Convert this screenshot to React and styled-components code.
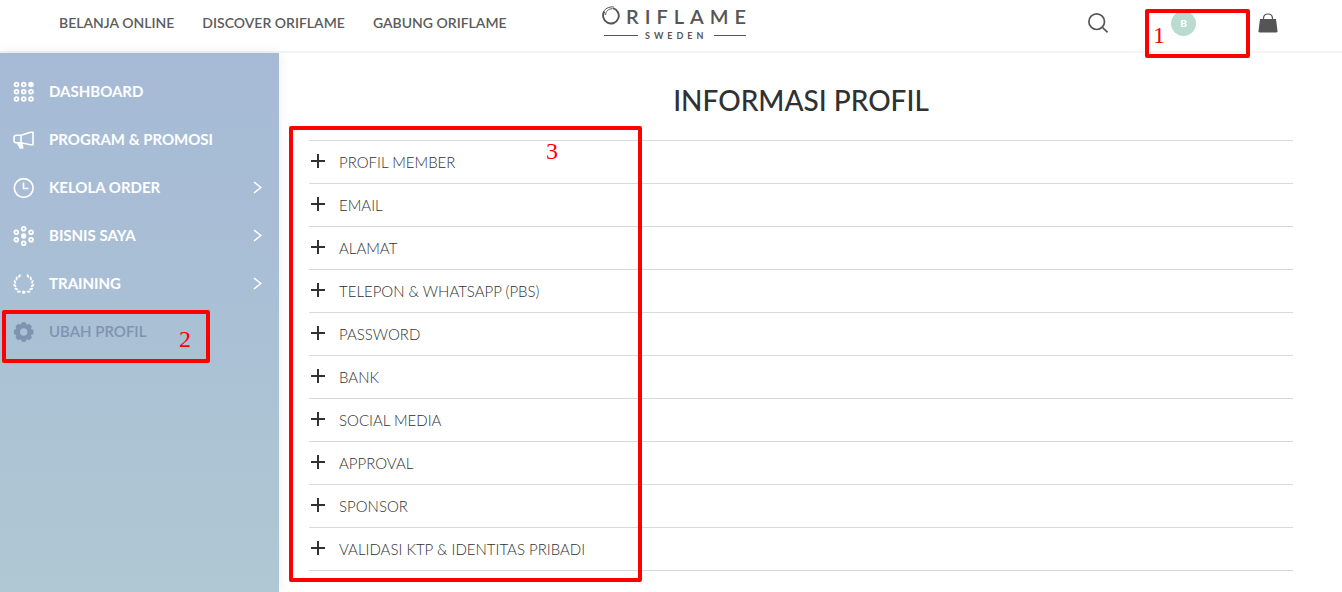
import React from 'react';
import styled, { createGlobalStyle } from 'styled-components';

const GlobalStyle = createGlobalStyle`
  *, *::before, *::after { box-sizing: border-box; }
  body { margin: 0; background: #fff; color: #2f3133; font-family: Lato, "Liberation Sans", sans-serif; }
  h1, ul { margin: 0; padding: 0; }
  ul { list-style: none; }
  a { color: inherit; text-decoration: none; }
  button { font: inherit; color: inherit; background: none; border: 0; padding: 0; cursor: pointer; }
`;

const Page = styled.div`
  display: flex;
  flex-direction: column;
  min-height: 100vh;
`;

const Header = styled.header`
  display: grid;
  grid-template-columns: 1fr auto 1fr;
  align-items: center;
  height: 53px;
  padding: 0 64px 0 59px;
  border-bottom: 2px solid #f4f4f4;
`;

const TopNav = styled.nav`
  display: flex;
  gap: 28px;
  padding-bottom: 6px;
`;

const TopLink = styled.a`
  font-size: 14px;
  font-weight: 600;
  line-height: 20px;
  white-space: nowrap;
  color: #5b5b5b;
`;

const LogoLink = styled.a`
  display: block;
  height: 42px;
  margin-bottom: 8px;
  padding-left: 20px;
  svg { display: block; }
`;

const Actions = styled.div`
  display: flex;
  justify-content: flex-end;
  align-items: center;
  padding-bottom: 5px;
`;

const IconButton = styled.button`
  display: flex;
`;

const Account = styled.div`
  position: relative;
  display: flex;
  margin: 0 62px 0 63px;
`;

const Avatar = styled.button`
  width: 25px;
  height: 25px;
  border-radius: 50%;
  background: #b9dbd0;
  color: #fff;
  font-size: 10px;
  font-weight: 900;
  line-height: 25px;
  text-align: center;
`;

const Body = styled.div`
  display: flex;
  flex: 1;
`;

const Sidebar = styled.aside`
  flex: 0 0 279px;
  padding-top: 15px;
  background: linear-gradient(#a6bad5, #aac0d5 50%, #afc8d3);
  box-shadow: 0 0 12px rgba(0, 0, 0, 0.08);
`;

const MenuItem = styled.li`
  position: relative;
`;

const MenuLink = styled.a`
  display: flex;
  align-items: center;
  gap: 13px;
  height: 48px;
  padding: 0 15px 0 12px;
  font-size: 15px;
  font-weight: ${(p) => (p.$active ? 600 : 700)};
  color: ${(p) => (p.$active ? '#7f93b0' : '#fff')};
`;

const MenuLabel = styled.span`
  flex: 1;
  padding-bottom: 2px;
`;

const Main = styled.main`
  flex: 1;
  min-width: 0;
  padding: 27px 49px 21px 30px;
`;

const Title = styled.h1`
  font-size: 28px;
  font-weight: 500;
  line-height: 40px;
  text-align: center;
`;

const Accordion = styled.div`
  position: relative;
  margin-top: 20px;
  border-top: 1px solid #d9d9d9;
`;

const AccordionRow = styled.button`
  display: flex;
  align-items: center;
  gap: 13px;
  width: 100%;
  height: 43px;
  padding-left: 1px;
  border-bottom: 1px solid #d9d9d9;
  font-size: 15px;
  font-weight: 300;
  text-align: left;
`;

const Highlight = styled.div`
  position: absolute;
  z-index: 2;
  top: ${(p) => p.$top}px;
  left: ${(p) => p.$left}px;
  width: ${(p) => p.$width}px;
  height: ${(p) => p.$height}px;
  border: 4px solid #f00;
  border-radius: 2px;
  pointer-events: none;
`;

const Marker = styled.span`
  position: absolute;
  top: ${(p) => p.$top}px;
  left: ${(p) => p.$left}px;
  font-family: "Liberation Serif", serif;
  font-size: 24px;
  font-weight: 400;
  line-height: 24px;
  color: #f00;
`;

const Glyph = ({ size = 24, children }) => (
  <svg width={size} height={size} viewBox="0 0 24 24" fill="none" stroke="currentColor" aria-hidden="true">
    {children}
  </svg>
);

const Logo = () => (
  <svg width="154" height="42" viewBox="0 0 154 42" role="img" aria-label="Oriflame Sweden">
    <g fill="#555" fontFamily="Lato, sans-serif">
      <text x="24" y="23" fontSize="20" fontWeight="600" letterSpacing="6">RIFLAME</text>
      <text x="43" y="38" fontSize="9" fontWeight="700" letterSpacing="4">SWEDEN</text>
    </g>
    <g fill="none" stroke="#555">
      <path d="M11 7.200A7.800 7.800 0 1 1 2.400 10.500" strokeWidth="1.900" />
      <path d="M1 14.500C.500 9.500 4.500 5.700 11.500 5.800M3.600 14C3.600 10.500 6 8 10.500 7.600" strokeWidth="1" />
      <path d="M2 34.500H36M112 34.500H144" />
    </g>
  </svg>
);

const DashboardIcon = () => (
  <Glyph>
    {[4.5, 11.75, 19].map((y) => [4.5, 11.75, 19].map((x) => (
      <circle key={`${x}-${y}`} cx={x} cy={y} r="1.900" strokeWidth="1.800"
        fill={x === 19 && y === 4.5 ? 'currentColor' : 'none'} />
    )))}
  </Glyph>
);

const MegaphoneIcon = () => (
  <Glyph>
    <path d="M9 7.200L18.500 4.200H21V16.800H18.500L9 14.800M9 7.200H4.500Q2 7.200 2 9.500V12.500Q2 14.800 4.500 14.800H9ZM9 7.200V14.800M5.500 15L8.300 20H10.800L9.500 15M7.800 15.500L9.800 19.500" strokeWidth="1.600" strokeLinejoin="round" />
  </Glyph>
);

const ClockIcon = () => (
  <Glyph>
    <circle cx="11.700" cy="12" r="9.400" strokeWidth="1.600" />
    <path d="M11.500 6.500V12.500H16.500" strokeWidth="1.600" />
  </Glyph>
);

const NetworkIcon = () => (
  <Glyph>
    <circle cx="11.700" cy="12" r="2.700" fill="currentColor" stroke="none" />
    {[[11.7, 4.7], [4.3, 8.3], [19.1, 8.3], [4.3, 15.7], [19.1, 15.7], [11.7, 19.3]].map(([x, y]) => (
      <circle key={`${x}-${y}`} cx={x} cy={y} r="1.900" strokeWidth="1.800" />
    ))}
  </Glyph>
);

const LaurelIcon = () => {
  const leaves = [28, 52, 76, 100, 124, 148];
  return (
    <Glyph>
      {leaves.flatMap((a) => [a, -a]).map((a) => (
        <ellipse key={a} cx="11.700" cy="3" rx="2" ry="1" fill="currentColor" stroke="none"
          transform={`rotate(${a} 11.700 12) rotate(${a > 0 ? 35 : -35} 11.700 3)`} />
      ))}
      <circle cx="11.700" cy="20.300" r="1.700" fill="currentColor" stroke="none" />
    </Glyph>
  );
};

const GearIcon = () => (
  <Glyph>
    <circle cx="11.700" cy="12" r="6" strokeWidth="4.600" />
    {[0, 45, 90, 135, 180, 225, 270, 315].map((a) => (
      <rect key={a} x="9.300" y="2.200" width="4.800" height="4" rx="1.200" fill="currentColor" stroke="none"
        transform={`rotate(${a} 11.700 12)`} />
    ))}
  </Glyph>
);

const Chevron = () => (
  <svg width="12" height="14" viewBox="0 0 12 14" fill="none" stroke="currentColor" strokeWidth="1.600" aria-hidden="true">
    <path d="M2 1L8.800 6.500L2 12" />
  </svg>
);

const PlusIcon = () => (
  <svg width="16" height="16" viewBox="0 0 16 16" aria-hidden="true">
    <path d="M8 0V14M1 7H15" stroke="#2f3133" strokeWidth="2" />
  </svg>
);

const RowLabel = styled.span`
  padding-bottom: 1px;
`;

const topLinks = ['BELANJA ONLINE', 'DISCOVER ORIFLAME', 'GABUNG ORIFLAME'];

const menu = [
  { label: 'DASHBOARD', Icon: DashboardIcon },
  { label: 'PROGRAM & PROMOSI', Icon: MegaphoneIcon },
  { label: 'KELOLA ORDER', Icon: ClockIcon, expandable: true },
  { label: 'BISNIS SAYA', Icon: NetworkIcon, expandable: true },
  { label: 'TRAINING', Icon: LaurelIcon, expandable: true },
  { label: 'UBAH PROFIL', Icon: GearIcon, active: true },
];

const sections = [
  'PROFIL MEMBER', 'EMAIL', 'ALAMAT', 'TELEPON & WHATSAPP (PBS)', 'PASSWORD',
  'BANK', 'SOCIAL MEDIA', 'APPROVAL', 'SPONSOR', 'VALIDASI KTP & IDENTITAS PRIBADI',
];

export default function App() {
  return (
    <Page>
      <GlobalStyle />
      <Header>
        <TopNav>
          {topLinks.map((label) => <TopLink key={label} href="#">{label}</TopLink>)}
        </TopNav>
        <LogoLink href="#"><Logo /></LogoLink>
        <Actions>
          <IconButton aria-label="Search">
            <svg width="20" height="20" viewBox="0 0 20 20" fill="none" stroke="#555" strokeWidth="1.700">
              <circle cx="8.700" cy="8.700" r="7.800" />
              <path d="M14 14L19.500 19.300" />
            </svg>
          </IconButton>
          <Account>
            <Avatar>B</Avatar>
            <Highlight $top={-2} $left={-26} $width={105} $height={49}>
              <Marker $top={10} $left={4}>1</Marker>
            </Highlight>
          </Account>
          <IconButton aria-label="Shopping bag">
            <svg width="20" height="20" viewBox="0 0 20 20">
              <path d="M2 6H18L19.500 18Q19.600 19.500 18 19.500H2Q.400 19.500 .500 18Z" fill="#555" />
              <path d="M5.500 7V5.500Q5.500 1 10 1T14.500 5.500V7" fill="none" stroke="#555" strokeWidth="1.200" />
            </svg>
          </IconButton>
        </Actions>
      </Header>
      <Body>
        <Sidebar>
          <ul>
            {menu.map(({ label, Icon, expandable, active }) => (
              <MenuItem key={label}>
                <MenuLink href="#" $active={active}>
                  <Icon />
                  <MenuLabel>{label}</MenuLabel>
                  {expandable && <Chevron />}
                </MenuLink>
                {active && (
                  <Highlight $top={2} $left={2} $width={208} $height={53}>
                    <Marker $top={13} $left={173}>2</Marker>
                  </Highlight>
                )}
              </MenuItem>
            ))}
          </ul>
        </Sidebar>
        <Main>
          <Title>INFORMASI PROFIL</Title>
          <Accordion>
            {sections.map((label) => (
              <AccordionRow key={label} aria-expanded="false">
                <PlusIcon />
                <RowLabel>{label}</RowLabel>
              </AccordionRow>
            ))}
            <Highlight $top={-15} $left={-20} $width={353} $height={456}>
              <Marker $top={9} $left={253}>3</Marker>
            </Highlight>
          </Accordion>
        </Main>
      </Body>
    </Page>
  );
}
